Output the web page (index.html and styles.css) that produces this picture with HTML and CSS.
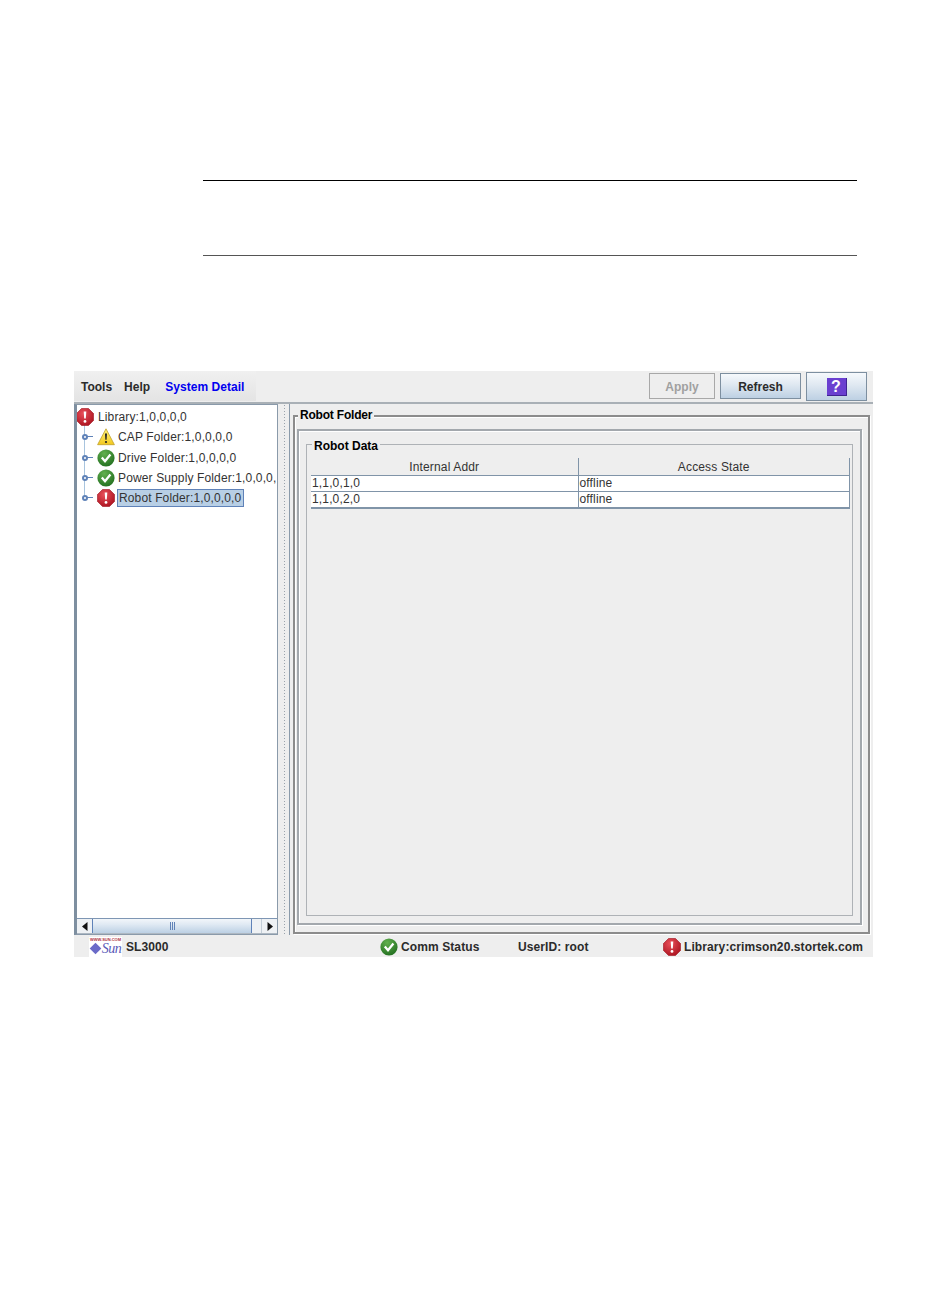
FILE: index.html
```html
<!DOCTYPE html>
<html lang="en">
<head>
<meta charset="utf-8">
<title>Robot Folder</title>
<link rel="stylesheet" href="styles.css">
</head>
<body>
<svg class="defs" width="0" height="0" aria-hidden="true">
  <defs>
    <radialGradient id="red" cx="40%" cy="30%" r="80%"><stop offset="0" stop-color="#e8505a"/><stop offset="1" stop-color="#a80f1c"/></radialGradient>
    <radialGradient id="green" cx="40%" cy="25%" r="85%"><stop offset="0" stop-color="#62b04e"/><stop offset="1" stop-color="#1d6a1c"/></radialGradient>
    <linearGradient id="yellow" x1="0" y1="0" x2="0" y2="1"><stop offset="0" stop-color="#fff27a"/><stop offset="1" stop-color="#f2c81e"/></linearGradient>
    <symbol id="err" viewBox="0 0 18 18">
      <path d="M5.500.5h7l5 5v7l-5 5h-7l-5-5v-7z" fill="url(#red)" stroke="#a01420" stroke-width=".6"/>
      <path d="M7.700 3.400h2.600l-.5 7.200H8.200z" fill="#fff"/><circle cx="9" cy="13.400" r="1.400" fill="#fff"/>
    </symbol>
    <symbol id="ok" viewBox="0 0 18 18">
      <circle cx="9" cy="9" r="8.600" fill="url(#green)"/>
      <path d="M4.800 8.600l3.200 3.600 5.400-6.600" fill="none" stroke="#fff" stroke-width="2.300"/>
    </symbol>
    <symbol id="warn" viewBox="0 0 18 18">
      <path d="M9 .8l8.400 15.900H.6z" fill="url(#yellow)" stroke="#bfa02a" stroke-width=".8" stroke-linejoin="round"/>
      <path d="M8 5.400h2l-.4 6.400H8.400z" fill="#222"/><circle cx="9" cy="14" r="1.100" fill="#222"/>
    </symbol>
  </defs>
</svg>

<div class="page">
  <div class="note"></div>

  <div class="app">
    <header class="toolbar">
      <nav class="menu">
        <span class="menu-item">Tools</span>
        <span class="menu-item">Help</span>
        <span class="menu-item menu-active">System Detail</span>
      </nav>
      <div class="actions">
        <button class="btn btn-disabled" type="button">Apply</button>
        <button class="btn btn-refresh" type="button">Refresh</button>
        <button class="btn btn-help" type="button" aria-label="Help"><span class="help-glyph">?</span></button>
      </div>
    </header>

    <div class="workspace">
      <aside class="tree-pane">
        <div class="tree">
          <div class="tree-line"></div>
          <div class="node node-root"><svg class="ico"><use href="#err"/></svg><span>Library:1,0,0,0,0</span></div>
          <div class="node"><i class="handle"></i><svg class="ico"><use href="#warn"/></svg><span>CAP Folder:1,0,0,0,0</span></div>
          <div class="node"><i class="handle"></i><svg class="ico"><use href="#ok"/></svg><span>Drive Folder:1,0,0,0,0</span></div>
          <div class="node"><i class="handle"></i><svg class="ico"><use href="#ok"/></svg><span>Power Supply Folder:1,0,0,0,</span></div>
          <div class="node"><i class="handle"></i><svg class="ico"><use href="#err"/></svg><span class="selected">Robot Folder:1,0,0,0,0</span></div>
        </div>
        <div class="hscroll">
          <span class="arrow"><svg width="6" height="9" viewBox="0 0 6 9"><path d="M5.500 0v9L0 4.500z" fill="#111"/></svg></span>
          <span class="thumb"><i></i></span>
          <span class="track"></span>
          <span class="arrow arrow-r"><svg width="6" height="9" viewBox="0 0 6 9"><path d="M.5 0v9L6 4.500z" fill="#111"/></svg></span>
        </div>
      </aside>

      <div class="splitter"></div>

      <main class="detail">
        <section class="frame-outer">
          <h2 class="legend legend-outer">Robot Folder</h2>
          <div class="frame-inner">
            <section class="group">
              <h3 class="legend legend-group">Robot Data</h3>
              <table class="grid">
                <thead><tr><th>Internal Addr</th><th>Access State</th></tr></thead>
                <tbody>
                  <tr><td>1,1,0,1,0</td><td>offline</td></tr>
                  <tr><td>1,1,0,2,0</td><td>offline</td></tr>
                </tbody>
              </table>
            </section>
          </div>
        </section>
      </main>
    </div>

    <footer class="status">
      <div class="brand">
        <div class="logo">
          <span class="logo-url">WWW.SUN.COM</span>
          <span class="logo-row"><i class="logo-mark"></i><em>Sun</em></span>
        </div>
        <span>SL3000</span>
      </div>
      <div class="stat stat-comm"><svg class="ico"><use href="#ok"/></svg><span>Comm Status</span></div>
      <div class="stat stat-user"><span>UserID: root</span></div>
      <div class="stat stat-lib"><svg class="ico"><use href="#err"/></svg><span>Library:crimson20.stortek.com</span></div>
    </footer>
  </div>
</div>
</body>
</html>
```

FILE: styles.css
```css
* { box-sizing: border-box; }
html, body { margin: 0; padding: 0; background: #fff; }
body { font-family: "Liberation Sans", Arial, sans-serif; font-size: 12px; color: #222; }
.defs { position: absolute; }
.page { height: 1299px; padding-top: 180px; }

.note {
  margin-left: 203px; width: 654px; height: 76px;
  border-top: 1px solid #000; border-bottom: 1px solid #555;
  margin-bottom: 115px;
}

.app { margin-left: 74px; width: 799px; height: 586px; display: flex; flex-direction: column; background: #eee; }

.toolbar { height: 33px; display: flex; justify-content: space-between; border-bottom: 2px solid #a9b0b6; background: #eee; }
.menu {
  width: 182px; height: 30px; display: flex; align-items: center; padding: 1px 0 0 7px;
  background: linear-gradient(#f0f0f0, #e4e4e4);
  font-weight: bold;
}
.menu-item { margin-right: 12px; color: #2b2b2b; }
.menu-active { color: #0000f0; margin-left: 3px; margin-right: 0; letter-spacing: .05px; }
.actions { display: flex; align-items: flex-start; padding: 2px 6px 0 0; }
.btn {
  font: bold 12px "Liberation Sans", Arial, sans-serif; height: 26px; padding: 1px 0 0;
  border: 1px solid #7d8fa0; background: linear-gradient(#f6f9fc, #dfe8f1 45%, #bdd0e3); color: #2b2b2b;
}
.btn-disabled { width: 66px; margin-right: 5px; background: #eee; color: #a0a0a0; border-color: #a8a8a8; }
.btn-refresh { width: 81px; margin-right: 5px; }
.btn-help { width: 61px; height: 29px; margin-top: -1px; display: flex; align-items: center; justify-content: center; }
.help-glyph {
  width: 20px; height: 18px; background: #6a3fd0; color: #fff; font-size: 16px; line-height: 18px; text-align: center;
  border-right: 1px solid #3e2390; border-bottom: 1px solid #3e2390;
}

.workspace { height: 531px; display: flex; }

.tree-pane {
  width: 204px; display: flex; flex-direction: column; background: #fff;
  border: 1px solid #8a9aaa; border-left: 3px solid #7e8fa0;
}
.tree { position: relative; flex: 1; padding-top: 2px; overflow: hidden; }
.tree-line { position: absolute; left: 7px; top: 20px; width: 1px; height: 74px; background: #a8c4de; }
.node { height: 20.33px; display: flex; align-items: center; padding-left: 20px; position: relative; white-space: nowrap; color: #333; letter-spacing: .13px; }
.node-root { padding-left: 0; margin-left: -1px; }
.ico { width: 18px; height: 18px; flex: none; }
.node span { margin-left: 3px; }
.node-root span { margin-left: 4px; }
.handle {
  position: absolute; left: 5px; top: 7px; width: 6px; height: 6px; border: 2px solid #5f82b8; border-radius: 50%; background: #fff;
}
.handle::after { content: ""; position: absolute; left: 3px; top: 0; width: 6px; height: 1px; background: #5f82b8; }
.node .selected { background: #b8cfe5; outline: 1px solid #5f82b8; padding: 1px 2px 1px 1px; margin-left: 3px; }

.hscroll { height: 16px; display: flex; background: #eee; border-top: 1px solid #7e96b4; border-bottom: 1px solid #aeb8c2; }
.arrow { width: 16px; display: flex; align-items: center; justify-content: center; background: #eef1f4; border-right: 1px solid #5f82b8; }
.arrow-r { border-right: 0; border-left: 1px solid #c3cdd7; }
.thumb {
  width: 159px; display: flex; align-items: center; justify-content: center;
  background: linear-gradient(#f2f6fa, #dfe9f3 40%, #bcd0e4); border-right: 1px solid #5f82b8;
}
.thumb i { width: 5px; height: 8px; border-left: 1px solid #5f82b8; border-right: 1px solid #5f82b8; position: relative; }
.thumb i::after { content: ""; position: absolute; left: 1px; top: 0; width: 1px; height: 8px; background: #5f82b8; }
.track { flex: 1; background: #eef1f4; }

.splitter {
  width: 10px; margin-left: 2px; border-right: 1px solid #8a9aaa;
  background-image: radial-gradient(circle, #9aa3ac 0.7px, transparent 0.8px);
  background-size: 3px 3px; background-position: 3px 0; background-repeat: repeat-y;
  background-clip: content-box;
}

.detail { width: 582px; padding: 11px 2px 2px 3px; }
.frame-outer {
  position: relative; height: 519px; width: 577px; padding: 12px 6px 7px 2px;
  border: 2px solid #8c8c8c;
  box-shadow: 1px 1px 0 #fff, inset 1px 1px 0 #fff;
}
.frame-inner {
  height: 100%; padding: 13px 7px 7px 7px;
  border: 2px solid #a3a8ad; box-shadow: inset 1px 1px 0 #fff, 1px 1px 0 #fff;
}
.group { position: relative; height: 100%; padding: 13px 1px 0 4px; border: 1px solid #aeb2b6; }
.legend { position: absolute; margin: 0; padding: 0 2px; background: #eee; color: #000; font-size: 12px; font-weight: bold; line-height: 14px; }
.legend-outer { left: 3px; top: -9px; letter-spacing: -.2px; }
.legend-group { left: 5px; top: -6px; }

.grid { width: 539px; border-collapse: collapse; table-layout: fixed; background: #fff; border-bottom: 2px solid #8094a8; color: #333; letter-spacing: .15px; }
.grid th { height: 17px; padding: 2px 0 0; font-weight: normal; background: #eee; border-right: 1px solid #8094a8; border-bottom: 1px solid #8094a8; line-height: 14px; text-align: center; }
.grid td { height: 16px; padding: 0 0 1px 1px; line-height: 14px; border-right: 1px solid #8094a8; border-bottom: 1px solid #8094a8; }
.grid tr:last-child td { border-bottom: 0; }
.grid th:first-child, .grid td:first-child { width: 267px; }

.status { flex: 1; display: flex; align-items: center; padding-top: 1px; font-weight: bold; color: #2b2b2b; letter-spacing: .1px; }
.brand { width: 306px; display: flex; align-items: center; padding-left: 15px; gap: 4px; }
.logo { width: 33px; height: 20px; background: #fff; display: flex; flex-direction: column; align-items: center; overflow: hidden; letter-spacing: 0; }
.logo-url { font-size: 4px; line-height: 5px; color: #b03040; font-weight: bold; }
.logo-row { display: flex; align-items: center; gap: 1px; }
.logo-mark { width: 11px; height: 11px; background: #6a6ac8; transform: rotate(45deg) scale(.75); }
.logo-row em { font: italic 14px/14px "Liberation Serif", serif; color: #5a5ab8; letter-spacing: -.5px; }
.stat { display: flex; align-items: center; gap: 3px; }
.stat-comm { width: 138px; }
.stat-user { width: 145px; }
```
